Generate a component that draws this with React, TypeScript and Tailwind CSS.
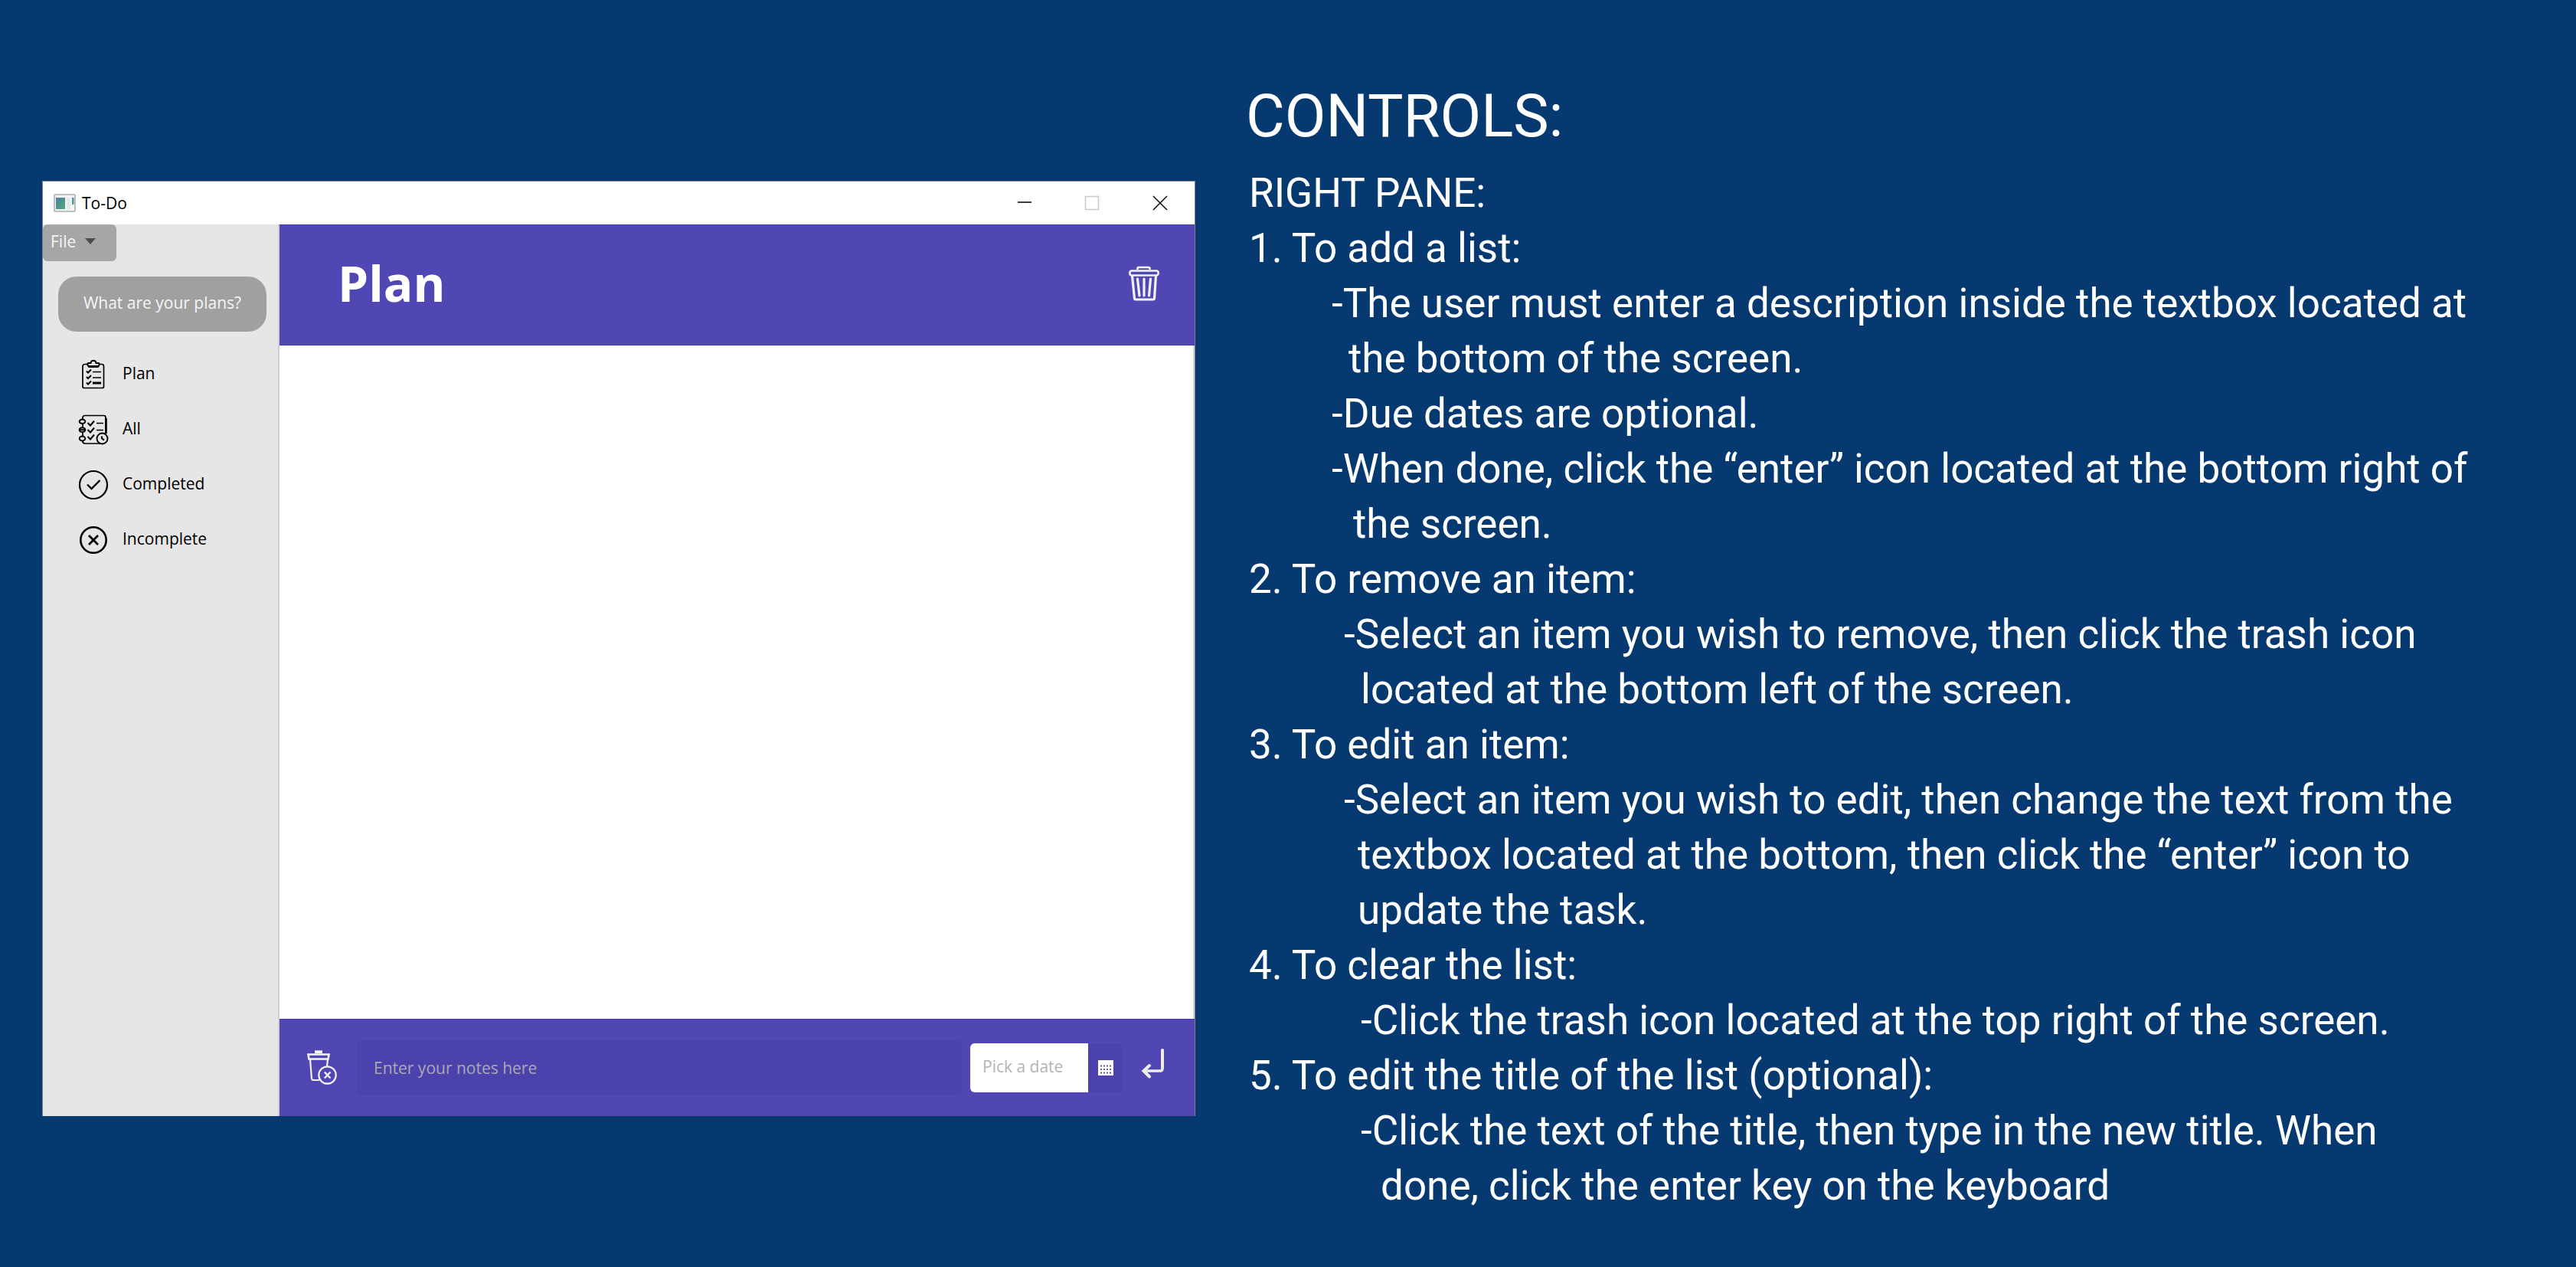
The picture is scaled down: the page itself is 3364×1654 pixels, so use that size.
import React from "react";

const blocks = [
  {
    title: "1. To add a list:",
    lines: [
      { pad: "pl-[108px]", text: "-The user must enter a description inside the textbox located at" },
      { pad: "pl-[130px]", text: "the bottom of the screen." },
      { pad: "pl-[108px]", text: "-Due dates are optional." },
      { pad: "pl-[108px]", text: "-When done, click the “enter” icon located at the bottom right of" },
      { pad: "pl-[136px]", text: "the screen." },
    ],
  },
  {
    title: "2. To remove an item:",
    lines: [
      { pad: "pl-[124px]", text: "-Select an item you wish to remove, then click the trash icon" },
      { pad: "pl-[146px]", text: "located at the bottom left of the screen." },
    ],
  },
  {
    title: "3. To edit an item:",
    lines: [
      { pad: "pl-[124px]", text: "-Select an item you wish to edit, then change the text from the" },
      { pad: "pl-[142px]", text: "textbox located at the bottom, then click the “enter” icon to" },
      { pad: "pl-[142px]", text: "update the task." },
    ],
  },
  {
    title: "4. To clear the list:",
    lines: [{ pad: "pl-[146px]", text: "-Click the trash icon located at the top right of the screen." }],
  },
  {
    title: "5. To edit the title of the list (optional):",
    lines: [
      { pad: "pl-[146px]", text: "-Click the text of the title, then type in the new title. When" },
      { pad: "pl-[172px]", text: "done, click the enter key on the keyboard" },
    ],
  },
];

function AppIcon() {
  return (
    <svg width="29" height="25" viewBox="0 0 29 25" aria-hidden="true">
      <defs>
        <linearGradient id="pane" x1="0" y1="0" x2="1" y2="1">
          <stop offset="0" stopColor="#4a80a0" />
          <stop offset="1" stopColor="#52a878" />
        </linearGradient>
      </defs>
      <rect x="1" y="1" width="27" height="22" rx="1" fill="#f4f5f6" stroke="#a9adb3" strokeWidth="1.6" />
      <rect x="3" y="5" width="12" height="15" fill="url(#pane)" />
      <rect x="17" y="5" width="5" height="15" fill="#e6e7e8" />
      <rect x="24" y="5" width="2.5" height="9" fill="url(#pane)" />
    </svg>
  );
}

function ClipboardIcon() {
  return (
    <svg width="40" height="40" viewBox="0 0 40 40" fill="none" stroke="#000" strokeWidth="1.7" aria-hidden="true">
      <path d="M13 6.500H8.500a2.500 2.500 0 0 0-2.500 2.500V35.500a2 2 0 0 0 2 2H31.500a2 2 0 0 0 2-2V9a2.500 2.500 0 0 0-2.500-2.500H27" />
      <path d="M13.500 5H16.500C17 .8 23 .8 23.500 5H26.500q1.500 0 1.200 1.800L26.500 9.500Q26 10 25 10H15Q14 10 13.500 9.500L12.500 6.800Q12 5 13.500 5Z" strokeWidth="2" />
      <path d="M14 9.500H26" strokeWidth="3" />
      <path d="M11 15.500l2 2 4-4M11 23l2 2 4-4M11 30.500l2 2 4-4" strokeWidth="2" />
      <path d="M19 16.500H30M19 24H30" />
      <path d="M19 31H30" strokeWidth="3" />
    </svg>
  );
}

function NotebookIcon() {
  return (
    <svg width="40" height="40" viewBox="0 0 40 40" fill="none" stroke="#000" strokeWidth="1.7" aria-hidden="true">
      <path d="M6 6V4a2.500 2.500 0 0 1 2.500-2.500H33.500A2.500 2.500 0 0 1 36 4V25M6 13v4M6 24v4M6 35q0 3 3 3H30" />
      <path d="M36.500 5V25" strokeWidth="2.600" />
      <ellipse cx="5.500" cy="9.300" rx="3.800" ry="2.700" strokeWidth="2" />
      <ellipse cx="5.500" cy="20.200" rx="3.800" ry="2.900" strokeWidth="2" />
      <path d="M2 20.200h7" strokeWidth="2" />
      <ellipse cx="5.500" cy="31.500" rx="3.800" ry="2.900" strokeWidth="2" />
      <path d="M12.500 11l3.500 3.500 5-6M12.500 20l3.500 3.500 5-6M12.500 29l3.500 3.500 5-6" strokeWidth="2" />
      <path d="M24 11.500h9M24 20.500h9" />
      <circle cx="31.500" cy="31.500" r="7" strokeWidth="1.900" fill="#e6e6e6" />
      <path d="M31 28.500v2.800l3 2.200" strokeWidth="2.200" />
    </svg>
  );
}

function CheckCircleIcon() {
  return (
    <svg width="40" height="40" viewBox="0 0 40 40" fill="none" stroke="#000" aria-hidden="true">
      <circle cx="20" cy="20" r="18" strokeWidth="2.200" />
      <path d="M12 19.500l5.500 5.500L28.500 14" strokeWidth="2.400" />
    </svg>
  );
}

function CrossCircleIcon() {
  return (
    <svg width="40" height="40" viewBox="0 0 40 40" fill="none" stroke="#000" aria-hidden="true">
      <circle cx="20" cy="20" r="16.700" strokeWidth="2.600" />
      <path d="M14 14L26 26M26 14L14 26" strokeWidth="2.800" />
    </svg>
  );
}

function TrashIcon() {
  return (
    <svg width="40" height="46" viewBox="0 0 40 46" fill="none" stroke="#f1f0ee" strokeWidth="2.600" aria-hidden="true">
      <path d="M11.500 5V3.500a1.500 1.500 0 0 1 1.500-1.500H26a1.500 1.500 0 0 1 1.500 1.500V5" />
      <path d="M4 6.500H36Q38.700 6.500 38.700 9.500 38.700 12.500 36 12.500H4Q1.300 12.500 1.300 9.500 1.300 6.500 4 6.500Z" />
      <path d="M4.500 13L7.500 42.500Q7.600 44 9 44H32Q33.400 44 33.500 42.500L35.500 13" strokeWidth="3.200" />
      <path d="M11.500 17L14 39M20 17V39M28.500 17L26.500 39" strokeWidth="3.200" strokeLinecap="round" />
    </svg>
  );
}

function TrashCancelIcon() {
  return (
    <svg width="40" height="46" viewBox="0 0 40 46" fill="none" stroke="#f4f4f6" strokeWidth="2.200" aria-hidden="true">
      <path d="M10 2.200H20" strokeWidth="3.800" />
      <path d="M1.500 5.500H28.500L27.500 11.500H2.500Z" strokeWidth="2.600" />
      <path d="M4 12L6 37Q6.200 39 8 39H16" />
      <path d="M27 12L26 21" />
      <circle cx="26.500" cy="32.500" r="11.200" />
      <path d="M22.800 28.500L30.500 36.500M30.500 28.500L22.800 36.500" strokeWidth="2.400" />
    </svg>
  );
}

function CalendarIcon() {
  return (
    <svg width="20" height="20" viewBox="0 0 20 20" aria-hidden="true">
      <rect width="20" height="20" fill="#fff" />
      <g stroke="#6158bb" strokeWidth="2" strokeDasharray="2 2">
        <path d="M3 7.500H18M3 12H18M3 16.500H18" />
      </g>
    </svg>
  );
}

function EnterIcon() {
  return (
    <svg width="32" height="40" viewBox="0 0 32 40" fill="none" stroke="#eeedea" strokeWidth="4" strokeLinecap="round" aria-hidden="true">
      <path d="M28 3V27Q28 30 25 30H4" strokeWidth="3.600" />
      <path d="M28 3V26" />
      <path d="M11 23L3.500 30L11 37.500" />
    </svg>
  );
}

const navItems = [
  { label: "Plan", Icon: ClipboardIcon },
  { label: "All", Icon: NotebookIcon },
  { label: "Completed", Icon: CheckCircleIcon },
  { label: "Incomplete", Icon: CrossCircleIcon },
];

function TodoWindow() {
  return (
    <section className="mt-[236px] border border-b-0 border-[#808080] bg-white font-['Open_Sans','Noto_Sans',sans-serif] text-[21px] leading-8 text-black">
      <div className="flex h-14 items-center pl-[14px]">
        <AppIcon />
        <span className="ml-2">To-Do</span>
        <div className="ml-auto flex h-full">
          <button aria-label="Minimize" className="flex w-[88px] items-center justify-center">
            <svg width="20" height="20" viewBox="0 0 20 20" stroke="#111" strokeWidth="1.600">
              <path d="M1 9h18" />
            </svg>
          </button>
          <button aria-label="Maximize" disabled className="flex w-[88px] items-center justify-center">
            <svg width="20" height="20" viewBox="0 0 20 20" fill="none" stroke="#cbcbcb" strokeWidth="1.600">
              <rect x="1.500" y="1.500" width="17" height="17" />
            </svg>
          </button>
          <button aria-label="Close" className="flex w-[90px] items-center justify-center">
            <svg width="20" height="20" viewBox="0 0 20 20" stroke="#111" strokeWidth="1.600">
              <path d="M1 1l18 18M19 1L1 19" />
            </svg>
          </button>
        </div>
      </div>

      <div className="flex">
        <aside className="w-[309px] shrink-0 border-r-2 border-[#cfcfcf] bg-[#e6e6e6]">
          <button className="flex h-12 w-24 items-center gap-3 rounded-md bg-[#a6a6a6] pb-1 pl-[10px] text-[#f5f5f5]">
            File
            <svg width="14" height="8" viewBox="0 0 14 8" aria-hidden="true">
              <path d="M0 0H14L7 8Z" fill="#4d4d4d" />
            </svg>
          </button>
          <button className="mt-5 ml-5 flex h-[72px] w-[272px] items-center justify-center rounded-3xl bg-[#a0a0a0] pb-1 text-[#f5f5f5]">
            What are your plans?
          </button>
          <nav className="mt-5 flex flex-col">
            {navItems.map(({ label, Icon }) => (
              <button key={label} className="flex h-[72px] items-center gap-[18px] pl-[46px]">
                <Icon />
                <span className="pb-1">{label}</span>
              </button>
            ))}
          </nav>
        </aside>

        <main className="flex min-w-0 flex-1 flex-col">
          <header className="flex h-[158px] items-center justify-between border-y border-[#4436b0] bg-[#5046b4] pr-[46px] pb-1 pl-[76px]">
            <h1 className="text-[64px] leading-[80px] font-bold text-white">Plan</h1>
            <button aria-label="Clear list">
              <TrashIcon />
            </button>
          </header>
          <div className="h-[879px] border-r-2 border-[#d4d4d4] bg-white" />
          <footer className="flex h-[127px] items-center border-t border-[#4436b0] bg-[#5046b4] pr-[38px] pl-9">
            <button aria-label="Remove item">
              <TrashCancelIcon />
            </button>
            <input
              aria-label="Notes"
              placeholder="Enter your notes here"
              className="ml-[25px] h-[72px] min-w-0 flex-1 rounded-md bg-[#4c42ab] px-[22px] text-white placeholder:text-[#aaa8b4]"
            />
            <input
              aria-label="Due date"
              placeholder="Pick a date"
              className="ml-[11px] h-16 w-[154px] rounded-l-md bg-white px-4 pb-1 placeholder:text-[#b4b4b4]"
            />
            <button aria-label="Open calendar" className="flex h-16 w-[45px] items-center justify-center rounded-r-md bg-[#4c42ab]">
              <CalendarIcon />
            </button>
            <button aria-label="Enter" className="ml-6 pb-3">
              <EnterIcon />
            </button>
          </footer>
        </main>
      </div>
    </section>
  );
}

function Controls() {
  return (
    <section className="mt-24 whitespace-nowrap font-['Roboto',sans-serif] text-[53px] leading-[72px] text-white">
      <h2 className="-ml-1 mb-2 text-[78px] leading-[112px]">CONTROLS:</h2>
      <h3>RIGHT PANE:</h3>
      {blocks.map((b) => (
        <div key={b.title}>
          <p>{b.title}</p>
          {b.lines.map((l) => (
            <p key={l.text} className={l.pad}>
              {l.text}
            </p>
          ))}
        </div>
      ))}
    </section>
  );
}

export default function App() {
  return (
    <div className="grid min-h-screen grid-cols-[1506fr_1733fr] items-start gap-x-[70px] bg-[#063970] pl-[55px]">
      <TodoWindow />
      <Controls />
    </div>
  );
}
